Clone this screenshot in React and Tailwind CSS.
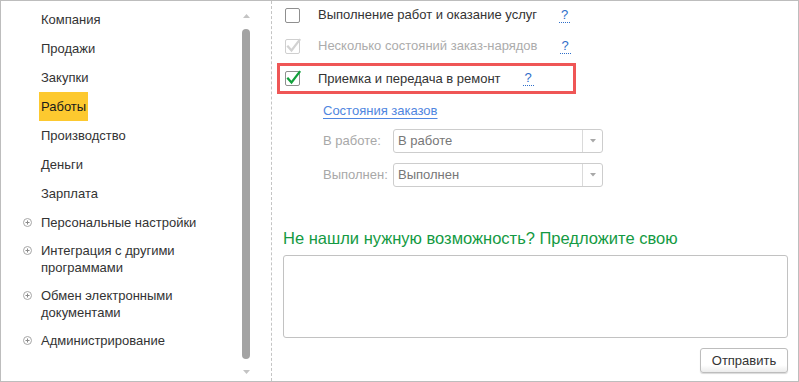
import React from "react";

function Plus() {
  return (
    <svg width="9" height="9" viewBox="0 0 9 9" className="shrink-0">
      <circle cx="4.5" cy="4.5" r="4" fill="none" stroke="#a6a6a6" strokeWidth="1" />
      <path d="M2.5 4.5h4M4.5 2.5v4" stroke="#8a8a8a" strokeWidth="1" />
    </svg>
  );
}

function NavItem({ children, plus, active }) {
  if (active) {
    return (
      <div className="h-[29px] flex items-stretch pl-[38px]">
        <span className="bg-[#fdc92f] px-[2px] flex items-center text-[#1a1a1a]">{children}</span>
      </div>
    );
  }
  if (plus) {
    return (
      <div className="flex items-start pl-[22px] pt-[6px] pb-[5px]">
        <div className="h-[17px] flex items-center mr-[9px]">
          <Plus />
        </div>
        <div className="leading-[17px]">{children}</div>
      </div>
    );
  }
  return <div className="h-[29px] flex items-center pl-[40px]">{children}</div>;
}

function Check({ state }) {
  if (state === "empty") {
    return <div className="w-[15px] h-[15px] border border-[#8f8f8f] rounded-[2px] bg-white shrink-0" />;
  }
  const disabled = state === "disabled";
  return (
    <div
      className={
        "w-[15px] h-[15px] border rounded-[2px] bg-white shrink-0 relative " +
        (disabled ? "border-[#cfcfcf]" : "border-[#8f8f8f]")
      }
    >
      <svg width="17" height="17" viewBox="0 0 17 17" className="absolute left-[-1px] top-[-3px]">
        <path
          d="M3 9.5 L6.5 13.5 L14.5 3"
          fill="none"
          stroke={disabled ? "#d2d2d2" : "#12a03c"}
          strokeWidth="2.2"
          strokeLinecap="square"
        />
      </svg>
    </div>
  );
}

function Help() {
  return (
    <span className="ml-[22px] text-[#2f6fc9] border-b border-dotted border-[#2f6fc9] leading-[14px] px-[2px]">?</span>
  );
}

function Combo({ value }) {
  return (
    <div className="w-[210px] h-[24px] border border-[#cdcdcd] rounded-[3px] flex items-stretch bg-white">
      <div className="flex-1 flex items-center pl-[4px] text-[#777]">{value}</div>
      <div className="w-[20px] border-l border-[#dadada] flex items-center justify-center">
        <svg width="6" height="4" viewBox="0 0 6 4">
          <path d="M0 0h6L3 3.5z" fill="#a8a8a8" />
        </svg>
      </div>
    </div>
  );
}

export default function App() {
  return (
    <div className="w-[799px] h-[382px] border border-[#bdbdbd] bg-white flex font-['Liberation_Sans',Arial,sans-serif] text-[13px] text-[#333]">
      {/* left panel */}
      <div className="w-[270px] flex">
        <div className="flex-1 pt-[4px] flex flex-col">
          <NavItem>Компания</NavItem>
          <NavItem>Продажи</NavItem>
          <NavItem>Закупки</NavItem>
          <NavItem active>Работы</NavItem>
          <NavItem>Производство</NavItem>
          <NavItem>Деньги</NavItem>
          <NavItem>Зарплата</NavItem>
          <NavItem plus>Персональные настройки</NavItem>
          <NavItem plus>
            Интеграция с другими
            <br />
            программами
          </NavItem>
          <NavItem plus>
            Обмен электронными
            <br />
            документами
          </NavItem>
          <NavItem plus>Администрирование</NavItem>
        </div>
        <div className="w-[8px] mr-[21px] flex flex-col items-center pt-[13px] pb-[7px]">
          <svg width="7" height="4" viewBox="0 0 7 4">
            <path d="M0 4L3.5 0L7 4z" fill="#c4c4c4" />
          </svg>
          <div className="w-[8px] flex-1 mt-[11px] mb-[11px] rounded-[4px] bg-[#a3a3a3]" />
          <svg width="7" height="4" viewBox="0 0 7 4">
            <path d="M0 0h7L3.5 4z" fill="#c4c4c4" />
          </svg>
        </div>
      </div>
      {/* divider */}
      <div className="w-0 border-l border-dashed border-[#c4c4c4]" />
      {/* right panel */}
      <div className="flex-1 flex flex-col pl-[11px] pr-[10px]">
        <div className="h-[28px] flex items-center pl-[2px]">
          <Check state="empty" />
          <span className="ml-[18px]">Выполнение работ и оказание услуг</span>
          <Help />
        </div>
        <div className="h-[28px] mt-[3px] flex items-center pl-[2px]">
          <Check state="disabled" />
          <span className="ml-[18px] text-[#acacac]">Несколько состояний заказ-нарядов</span>
          <Help />
        </div>
        <div className="mt-[3px] ml-[-6px] w-[299px] h-[31px] border-[3px] border-[#ef5656] flex items-center pl-[5px]">
          <Check state="checked" />
          <span className="ml-[18px]">Приемка и передача в ремонт</span>
          <Help />
        </div>
        <div className="mt-[9px] ml-[40px] h-[16px] flex items-center">
          <span className="text-[#4f86e0] underline underline-offset-[3px] decoration-[#4f86e0]">Состояния заказов</span>
        </div>
        <div className="mt-[10px] ml-[40px] flex items-center">
          <span className="w-[70px] text-[#a8a8a8]">В работе:</span>
          <Combo value="В работе" />
        </div>
        <div className="mt-[10px] ml-[40px] flex items-center">
          <span className="w-[70px] text-[#a8a8a8]">Выполнен:</span>
          <Combo value="Выполнен" />
        </div>
        <div className="mt-[41px] text-[16.5px] leading-[20px] text-[#149a43]">
          Не нашли нужную возможность? Предложите свою
        </div>
        <div className="mt-[7px] h-[83px] border border-[#c2c2c2] rounded-[3px] bg-white" />
        <div className="mt-[10px] flex justify-end">
          <div className="w-[88px] h-[25px] border border-[#bdbdbd] rounded-[3px] flex items-center justify-center text-[#333] bg-[linear-gradient(#ffffff_0%,#ffffff_70%,#ececec_100%)] shadow-[0_1px_1px_rgba(0,0,0,0.15)]">
            Отправить
          </div>
        </div>
      </div>
    </div>
  );
}
